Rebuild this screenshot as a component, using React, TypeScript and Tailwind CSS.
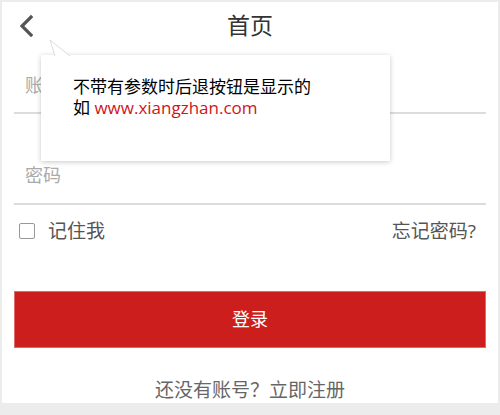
import React from "react"

const font = { fontFamily: '"Open Sans", "Noto Sans CJK SC", sans-serif' }

const BackIcon = () => (
  <svg width="18" height="24" viewBox="0 0 18 24" className="block">
    <path d="M13 3 L4 12 L13 21" fill="none" stroke="#555" strokeWidth="3.2" strokeLinecap="square" />
  </svg>
)

const Tooltip = () => (
  <div className="absolute left-[37px] top-[37px] w-[351px]">
    <svg width="40" height="18" viewBox="0 0 40 18" className="absolute left-[0px] top-0 z-10">
      <path d="M11 1 L16 17 L31 17 Z" fill="#fff" />
      <path d="M16 17 L11 1 L31 17" fill="none" stroke="#ddd" strokeWidth="1" />
    </svg>
    <div className="mt-[16px] ml-[2px] h-[106px] bg-white px-[32px] pt-[21px] text-[17px] leading-[21px] text-black shadow-[0_1px_5px_rgba(0,0,0,0.22)]">
      <div>不带有参数时后退按钮是显示的</div>
      <div>
        如 <span className="text-[#d0141c]">www.xiangzhan.com</span>
      </div>
    </div>
  </div>
)

export default function App() {
  return (
    <div className="h-[415px] w-[500px] bg-[#ececec] pl-[2px] pr-[2px] pt-[2px]" style={font}>
      <div className="relative h-[401px] bg-white">
        <div className="flex h-[46px] items-center justify-center relative">
          <div className="absolute left-[16px] top-[12px]">
            <BackIcon />
          </div>
          <span className="text-[23px] text-[#333]">首页</span>
        </div>

        <div className="mx-[12px]">
          <div className="flex h-[66px] items-center border-b-2 border-[#dcdcdc] pl-[11px] pt-[10px] text-[18px] text-[#aaa]">
            账号
          </div>
          <div className="mt-[33px] flex h-[58px] items-center border-b-2 border-[#dcdcdc] pl-[11px] text-[18px] text-[#aaa]">
            密码
          </div>

          <div className="mt-[12px] flex items-center justify-between">
            <label className="flex items-center gap-[13px] pl-[5px] text-[19px] text-[#555]">
              <span className="block h-[16px] w-[16px] rounded-[2px] border border-[#999]" />
              记住我
            </label>
            <span className="pr-[10px] text-[19px] text-[#555]">忘记密码?</span>
          </div>

          <button className="mt-[45px] flex h-[57px] w-full items-center justify-center border border-[#e06a68] bg-[#cc1f1d] text-[18px] text-white">
            登录
          </button>

          <div className="mt-[28px] text-center text-[19px] text-[#666]">还没有账号？立即注册</div>
        </div>

        <Tooltip />
      </div>
    </div>
  )
}
